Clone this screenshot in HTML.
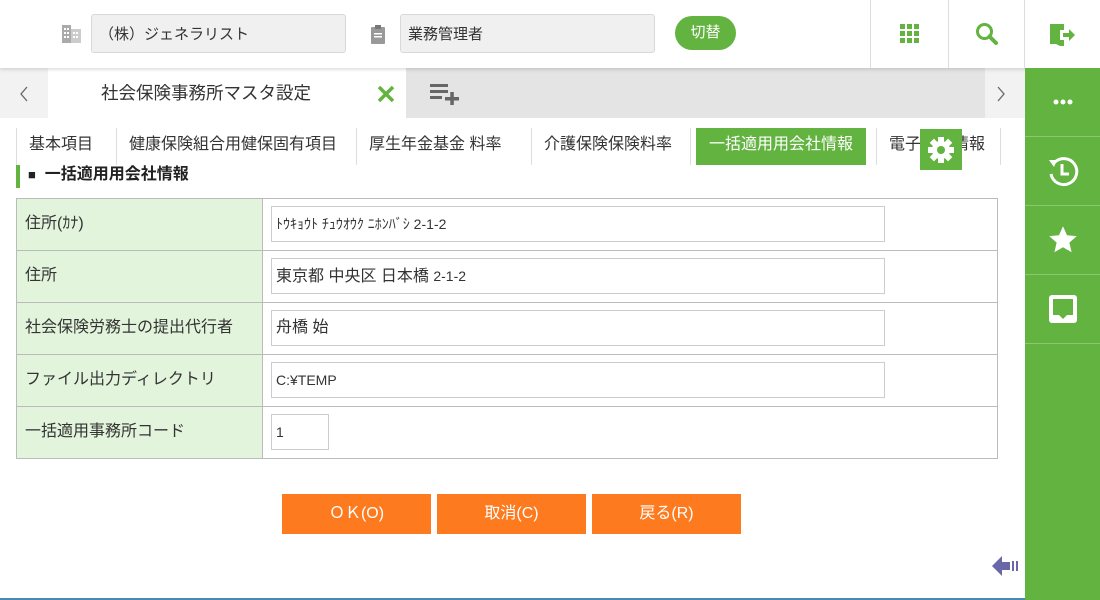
<!DOCTYPE html>
<html><head><meta charset="utf-8"><style>
*{box-sizing:border-box;margin:0;padding:0}
body{width:1100px;height:600px;overflow:hidden;background:#fff;font-family:"Liberation Sans","Noto Sans CJK JP",sans-serif;color:#333;position:relative;font-size:15px}
.abs{position:absolute}
.hdr{left:0;top:0;width:1100px;height:68px;background:#fff;box-shadow:0 2px 3px rgba(0,0,0,.12);z-index:2}
.inp{background:#f0f0f0;border:1px solid #d8d8d8;border-radius:3px;height:39px;top:14px;padding:8px 7px;font-size:15px}
.vd{top:0;width:1px;height:68px;background:#ddd}
.side{left:1025px;top:68px;width:75px;height:532px;background:#62b33f;z-index:3}
.side div{height:69px;border-bottom:1px solid #8cc870;display:flex;align-items:center;justify-content:center}
.st{top:128px;height:37px;font-size:16px;line-height:33px;padding:0 12px;border-left:1px solid #ddd}
.row{left:16px;width:982px;height:52px;border-bottom:1px solid #bbb}
.lbl{position:absolute;left:0;top:0;width:246px;height:100%;background:#e3f4dc;border-right:1px solid #bbb;padding-left:8px;line-height:50px;font-size:16px}
.fi{position:absolute;left:254px;top:7px;width:614px;height:36px;border:1px solid #ccc;padding-left:4px;line-height:34px;font-size:14px}
.btn{top:494px;width:149px;height:40px;background:#fd7a1f;color:#fff;text-align:center;line-height:40px;font-size:16px}
</style></head><body>
<div class="abs hdr">
 <svg class="abs" style="left:62px;top:24px" width="20" height="20" viewBox="0 0 20 20"><rect x="0" y="1" width="9" height="18" fill="#aaa"/><rect x="9" y="5" width="10" height="14" fill="#ccc"/><g fill="#fff"><rect x="2" y="4" width="2" height="2"/><rect x="5" y="4" width="2" height="2"/><rect x="2" y="8" width="2" height="2"/><rect x="5" y="8" width="2" height="2"/><rect x="2" y="12" width="2" height="2"/><rect x="5" y="12" width="2" height="2"/><rect x="11" y="8" width="2" height="2"/><rect x="14" y="8" width="2" height="2"/><rect x="11" y="12" width="2" height="2"/><rect x="14" y="12" width="2" height="2"/></g></svg>
 <div class="abs inp" style="left:91px;width:255px">（株）ジェネラリスト</div>
 <svg class="abs" style="left:370px;top:24px" width="16" height="20" viewBox="0 0 16 20"><rect x="1" y="3" width="14" height="17" rx="1" fill="#999"/><rect x="5" y="1" width="6" height="4" fill="#777"/><rect x="4" y="9" width="8" height="1.5" fill="#fff"/><rect x="4" y="12" width="8" height="1.5" fill="#fff"/></svg>
 <div class="abs inp" style="left:400px;width:255px">業務管理者</div>
 <div class="abs" style="left:675px;top:16px;width:61px;height:34px;border-radius:17px;background:#62b33f;color:#fff;text-align:center;line-height:34px;font-size:15px">切替</div>
 <div class="abs vd" style="left:870px"></div><div class="abs vd" style="left:948px"></div><div class="abs vd" style="left:1024px"></div>
 <svg class="abs" style="left:900px;top:24px" width="20" height="20"><g fill="#62b33f"><rect x="0" y="0" width="5" height="5"/><rect x="7" y="0" width="5" height="5"/><rect x="14" y="0" width="5" height="5"/><rect x="0" y="7" width="5" height="5"/><rect x="7" y="7" width="5" height="5"/><rect x="14" y="7" width="5" height="5"/><rect x="0" y="14" width="5" height="5"/><rect x="7" y="14" width="5" height="5"/><rect x="14" y="14" width="5" height="5"/></g></svg>
 <svg class="abs" style="left:975px;top:22px" width="24" height="24"><circle cx="9.5" cy="9.5" r="7" fill="none" stroke="#62b33f" stroke-width="3"/><path d="M14.5 14.5L21 21" stroke="#62b33f" stroke-width="4" stroke-linecap="round"/></svg>
 <svg class="abs" style="left:1050px;top:23px" width="26" height="24"><path d="M0 1h10v22l-4-2H0z" fill="#62b33f"/><path d="M10 1h4v6h-4zM10 17h4v6h-4z" fill="#62b33f"/><path d="M13 10h6V6l6 6-6 6v-4h-6z" fill="#62b33f"/></svg>
</div>
<div class="abs" style="left:0;top:68px;width:1025px;height:50px;background:#e4e4e4"></div>
<div class="abs" style="left:0;top:68px;width:48px;height:50px;background:#f2f2f2"><svg class="abs" style="left:19px;top:18px" width="10" height="16"><path d="M8 1L2 8l6 7" fill="none" stroke="#666" stroke-width="1.3"/></svg></div>
<div class="abs" style="left:48px;top:68px;width:358px;height:50px;background:#fff"></div>
<div class="abs" style="left:101px;top:68px;line-height:50px;font-size:17.5px">社会保険事務所マスタ設定</div>
<svg class="abs" style="left:377px;top:85px" width="18" height="18"><path d="M2 2L16 16M16 2L2 16" stroke="#62b33f" stroke-width="3.5"/></svg>
<svg class="abs" style="left:430px;top:83px" width="30" height="22"><g fill="#666"><rect x="0" y="1" width="18" height="3"/><rect x="0" y="7" width="18" height="3"/><rect x="0" y="13" width="12" height="3"/><rect x="15" y="14" width="14" height="3.5"/><rect x="20.3" y="9" width="3.5" height="13"/></g></svg>
<div class="abs" style="left:985px;top:68px;width:40px;height:50px;background:#f2f2f2"><svg class="abs" style="left:11px;top:18px" width="10" height="16"><path d="M2 1l6 7-6 7" fill="none" stroke="#666" stroke-width="1.3"/></svg></div>
<div class="abs side">
 <div><svg width="20" height="6"><circle cx="3" cy="3" r="2.5" fill="#fff"/><circle cx="10" cy="3" r="2.5" fill="#fff"/><circle cx="17" cy="3" r="2.5" fill="#fff"/></svg></div>
 <div><svg width="34" height="34" viewBox="0 0 34 34"><path d="M8 9A13 13 0 1 1 5 20" fill="none" stroke="#fff" stroke-width="3"/><path d="M3 6l8 0-3 7z" fill="#fff"/><path d="M16 10v10h7" fill="none" stroke="#fff" stroke-width="3"/></svg></div>
 <div><svg width="30" height="30" viewBox="0 0 24 24"><path d="M12 1l3.2 7.2 7.8.7-5.9 5.2 1.8 7.7L12 17.8 5.1 21.8l1.8-7.7L1 8.9l7.8-.7z" fill="#fff"/></svg></div>
 <div><svg width="32" height="32" viewBox="0 0 32 32"><rect x="2" y="2" width="28" height="28" rx="3" fill="#fff"/><path d="M6 6h20v16h-6l-4 4-4-4H6z" fill="#62b33f"/></svg></div>
</div>
<div class="abs st" style="left:16px">基本項目</div>
<div class="abs st" style="left:116px">健康保険組合用健保固有項目</div>
<div class="abs st" style="left:356px">厚生年金基金 料率</div>
<div class="abs st" style="left:531px">介護保険保険料率</div>
<div class="abs st" style="left:690px;padding-left:5px;padding-right:8px"><div style="background:#62b33f;color:#fff;padding:0 13px;height:37px;line-height:33px">一括適用用会社情報</div></div>
<div class="abs st" style="left:876px">電子媒体情報</div>
<div class="abs" style="left:1000px;top:128px;width:1px;height:37px;background:#ddd"></div>
<div class="abs" style="left:920px;top:129px;width:42px;height:41px;background:#62b33f;display:flex;align-items:center;justify-content:center"><svg width="30" height="30" viewBox="0 0 30 30"><g fill="#fff" transform="translate(15 15)"><rect x="-3" y="-13" width="6" height="26"/><rect x="-3" y="-13" width="6" height="26" transform="rotate(45)"/><rect x="-3" y="-13" width="6" height="26" transform="rotate(90)"/><rect x="-3" y="-13" width="6" height="26" transform="rotate(135)"/><circle r="9"/></g><circle cx="15" cy="15" r="4" fill="#62b33f"/></svg></div>
<div class="abs" style="left:16px;top:165px;width:4px;height:23px;background:#62b33f"></div>
<div class="abs" style="left:28px;top:163px;font-size:16px;font-weight:bold;line-height:23px;color:#222"><span style="font-size:13px">■</span>&nbsp;&nbsp;一括適用用会社情報</div>
<div class="abs" style="left:16px;top:198px;width:982px;height:261px;border:1px solid #bbb;border-bottom:none"></div>
<div class="abs row" style="top:199px;border-left:1px solid #bbb;border-right:1px solid #bbb"><div class="lbl">住所(ｶﾅ)</div><div class="fi">ﾄｳｷｮｳﾄ ﾁｭｳｵｳｸ ﾆﾎﾝﾊﾞｼ 2-1-2</div></div>
<div class="abs row" style="top:251px;border-left:1px solid #bbb;border-right:1px solid #bbb"><div class="lbl">住所</div><div class="fi" style="font-size:16px">東京都 中央区 日本橋 <span style="font-size:14px">2-1-2</span></div></div>
<div class="abs row" style="top:303px;border-left:1px solid #bbb;border-right:1px solid #bbb"><div class="lbl">社会保険労務士の提出代行者</div><div class="fi" style="font-size:16px">舟橋 始</div></div>
<div class="abs row" style="top:355px;border-left:1px solid #bbb;border-right:1px solid #bbb"><div class="lbl">ファイル出力ディレクトリ</div><div class="fi">C:¥TEMP</div></div>
<div class="abs row" style="top:407px;border-left:1px solid #bbb;border-right:1px solid #bbb"><div class="lbl">一括適用事務所コード</div><div class="fi" style="width:58px">1</div></div>
<div class="abs btn" style="left:282px">ＯＫ(O)</div>
<div class="abs btn" style="left:437px">取消(C)</div>
<div class="abs btn" style="left:592px">戻る(R)</div>
<svg class="abs" style="left:992px;top:554px" width="33" height="24"><path d="M0 12L10 2v6h8v8h-8v6z" fill="#6a66a8"/><rect x="20" y="7" width="2" height="10" fill="#6a66a8"/><rect x="24" y="7" width="2" height="10" fill="#6a66a8"/></svg>
<div class="abs" style="left:0;top:598px;width:1025px;height:2px;background:#4a8ab0"></div>
</body></html>
